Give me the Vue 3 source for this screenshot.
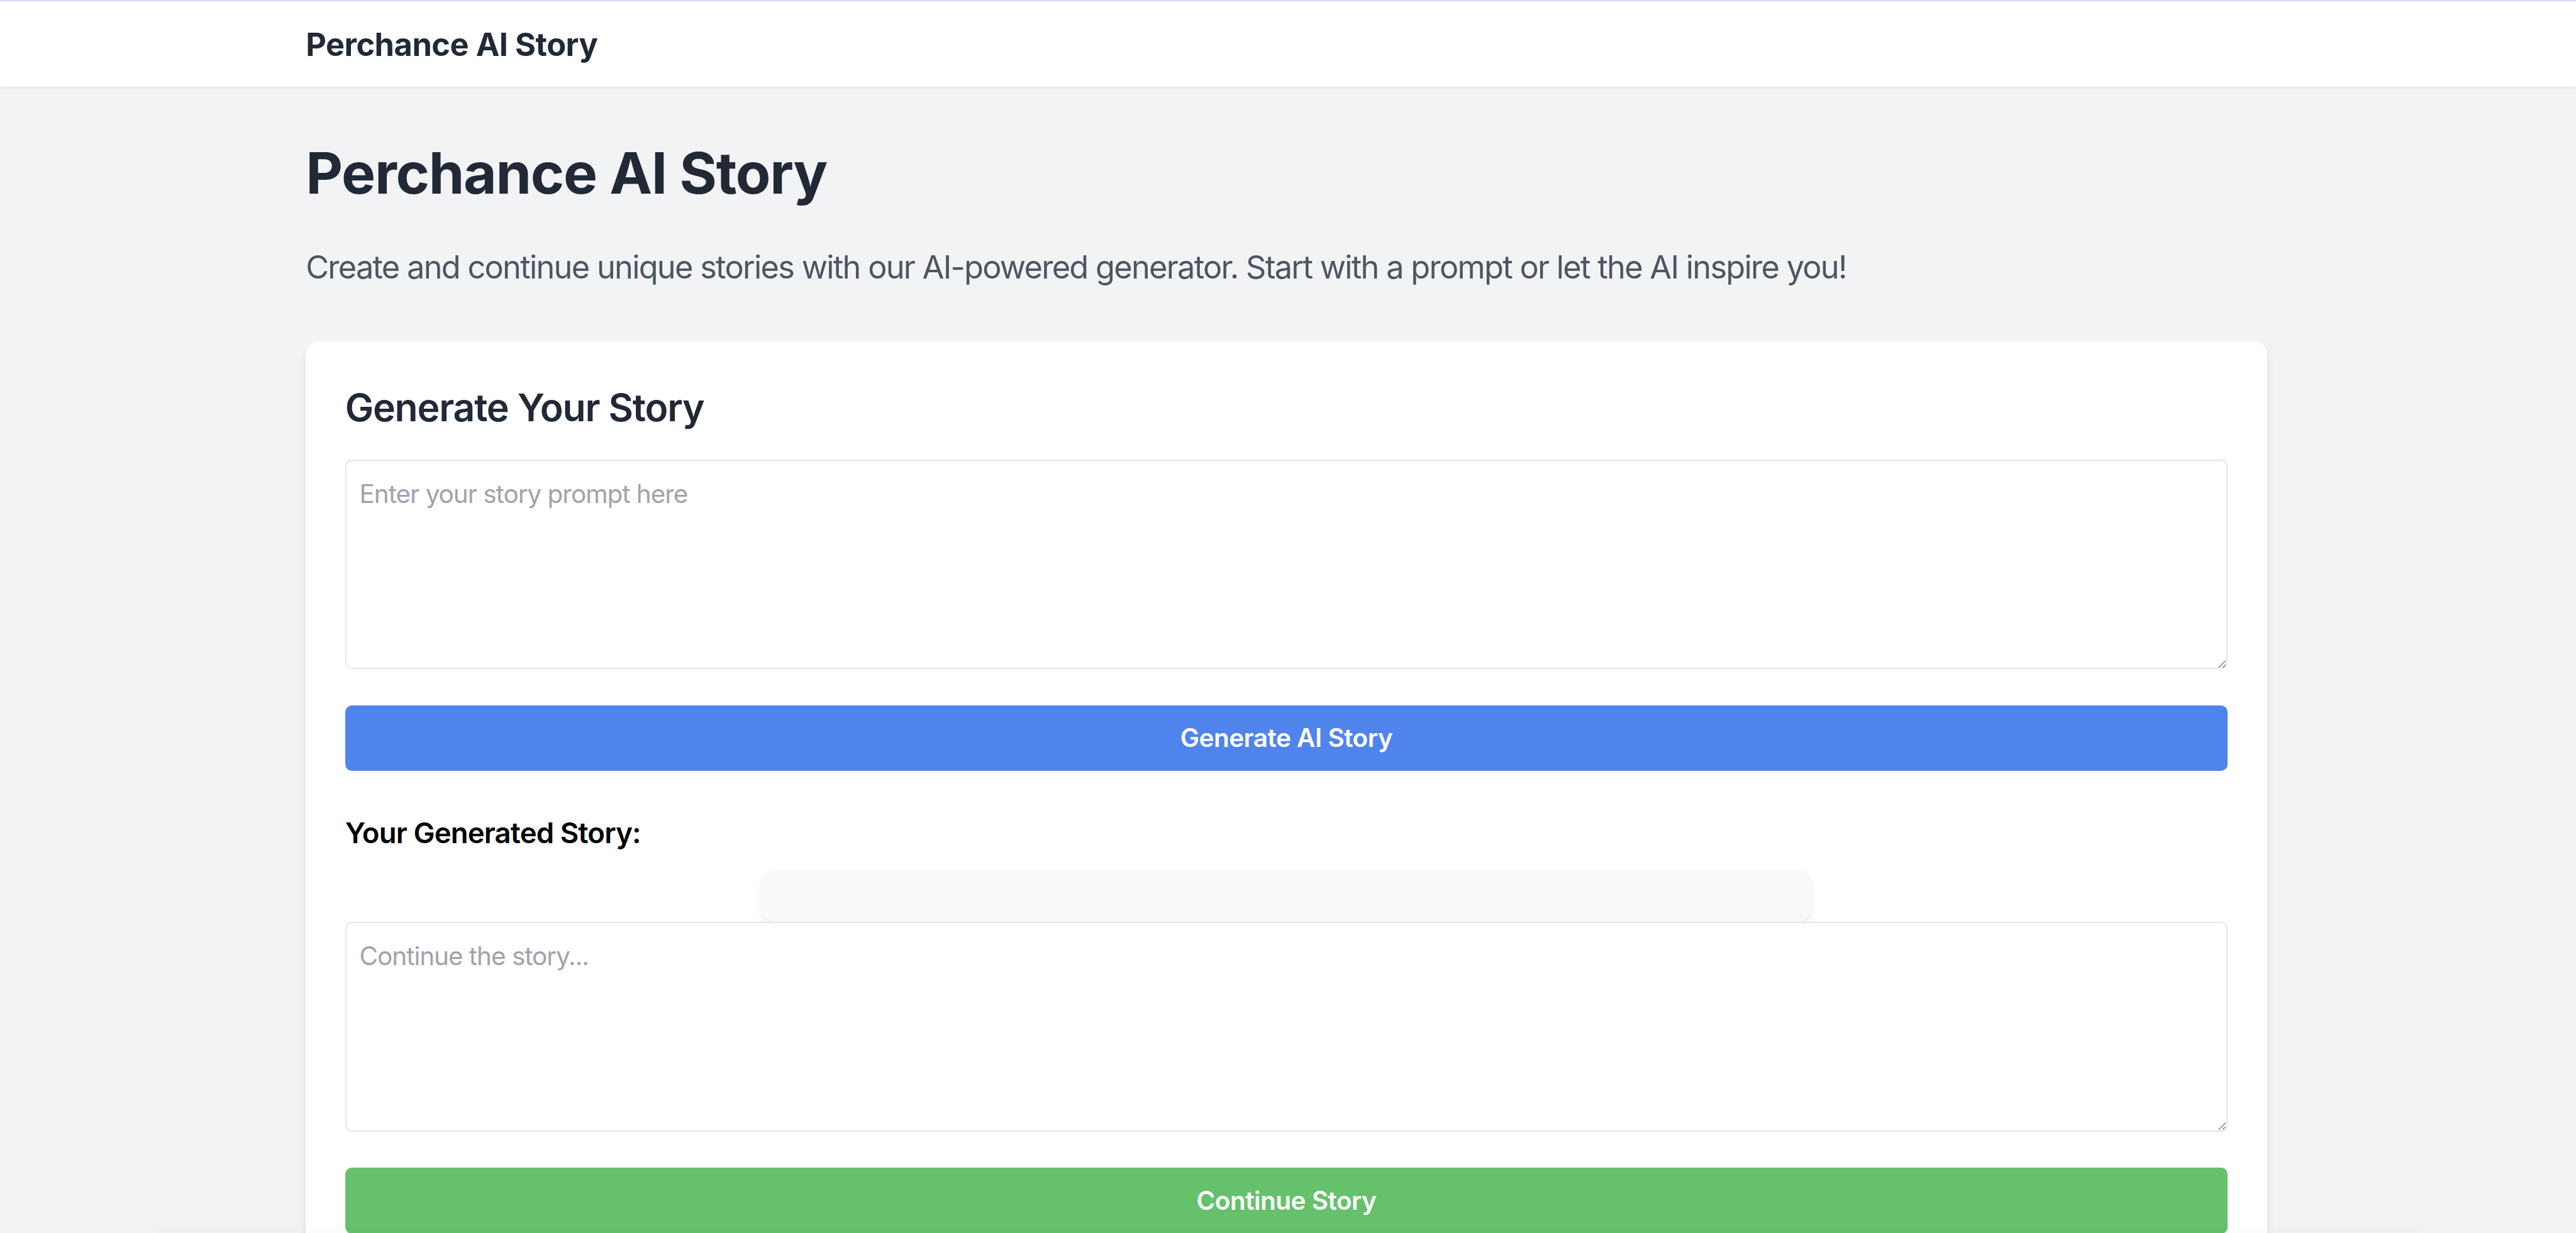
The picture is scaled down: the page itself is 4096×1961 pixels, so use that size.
<script setup>
import { ref } from 'vue'

const title = 'Perchance AI Story'
const prompt = ref('')
const continuation = ref('')
const story = ref('')
</script>

<template>
    <div class="page">
        <header class="nav">
            <div class="container">
                <span class="brand">{{ title }}</span>
            </div>
        </header>

        <main class="container">
            <h1>{{ title }}</h1>
            <p class="intro">
                Create and continue unique stories with our AI-powered generator. Start with a prompt or let the AI inspire you!
            </p>

            <section class="card">
                <h2>Generate Your Story</h2>
                <div class="field">
                    <textarea v-model="prompt" placeholder="Enter your story prompt here"></textarea>
                    <svg class="grip" viewBox="0 0 15 15">
                        <path d="M1 14 14 1M8.5 14 14 8.5" />
                    </svg>
                </div>
                <button class="btn blue-btn">Generate AI Story</button>

                <h3>Your Generated Story:</h3>
                <div class="story">{{ story }}</div>

                <div class="field">
                    <textarea v-model="continuation" placeholder="Continue the story..."></textarea>
                    <svg class="grip" viewBox="0 0 15 15">
                        <path d="M1 14 14 1M8.5 14 14 8.5" />
                    </svg>
                </div>
                <button class="btn green-btn">Continue Story</button>
            </section>
        </main>
        <div class="bottom-shade"></div>
    </div>
</template>

<style>
html{
    font-size: 41.694px;
}

body{
    margin: 0;
    overflow: hidden;
}
</style>

<style scoped>
.page{
    position: relative;
    box-sizing: border-box;
    height: 100vh;
    overflow: hidden;
    background: #f2f3f5;
    color: #212936;
    font-family: Inter, "Liberation Sans", sans-serif;
}

.container{
    width: 74.8rem;
    margin-left: 11.66rem;
}

.nav{
    position: relative;
    box-sizing: border-box;
    height: 3.3rem;
    padding-top: 0.785rem;
    border-top: 2px solid #d9d3f3;
    background: #fff;
    box-shadow: 0 0.0625rem 0.125rem rgba(0, 0, 0, 0.05);
}

.brand{
    display: block;
    font-size: 1.21rem;
    font-weight: 700;
    line-height: 1.75rem;
    letter-spacing: -0.009em;
}

h1, h2, h3, p{
    margin: 0;
    white-space: nowrap;
}

h1{
    padding-top: 2.056rem;
    font-size: 2.18rem;
    font-weight: 700;
    line-height: 2.5rem;
    letter-spacing: -0.0137em;
}

.intro{
    margin-top: 1.468rem;
    color: #4d5562;
    font-size: 1.21rem;
    line-height: 1.75rem;
    letter-spacing: -0.0337em;
}

.card{
    box-sizing: border-box;
    margin-top: 1.956rem;
    padding: 1.53rem 1.5rem 1.5rem;
    border-radius: 0.5rem;
    background: #fff;
    box-shadow: 0 0.25rem 0.375rem -0.0625rem rgba(0, 0, 0, 0.1), 0 0.125rem 0.25rem -0.125rem rgba(0, 0, 0, 0.1);
}

h2{
    margin-bottom: 0.97rem;
    font-size: 1.454rem;
    font-weight: 620;
    line-height: 2rem;
    letter-spacing: -0.019em;
}

.field{
    position: relative;
    height: 8rem;
    margin-bottom: 1.38rem;
}

textarea{
    display: block;
    box-sizing: border-box;
    width: 100%;
    height: 100%;
    padding: 0.53rem 0.5rem 0.5rem;
    border: 2px solid #e5e5ea;
    border-radius: 0.25rem;
    background: #fff;
    font-family: inherit;
    font-size: 0.97rem;
    line-height: 1.5rem;
    letter-spacing: -0.025em;
    resize: none;
    outline: none;
}

textarea::placeholder{
    color: #9ea3ae;
    opacity: 1;
}

.grip{
    position: absolute;
    right: 0.06rem;
    bottom: 0.05rem;
    width: 0.3rem;
    height: 0.3rem;
    fill: none;
    stroke: #606060;
    stroke-width: 1.4;
}

.btn{
    display: block;
    width: 100%;
    height: 2.5rem;
    padding: 0.03rem 0 0;
    border: none;
    border-radius: 0.25rem;
    color: #fff;
    font-family: inherit;
    font-size: 0.97rem;
    font-weight: 630;
    line-height: 2.47rem;
    letter-spacing: -0.012em;
}

.blue-btn{
    background: #4f84ed;
}

.green-btn{
    background: #65c16b;
}

h3{
    margin: 1.508rem 0 0.5rem;
    color: #000;
    font-size: 1.09rem;
    font-weight: 620;
    line-height: 1.75rem;
    letter-spacing: -0.018em;
}

.story{
    box-sizing: border-box;
    width: 40rem;
    height: 2rem;
    margin: 0 auto;
    padding: 1rem;
    border-radius: 0.5rem;
    background: #f9f9f9;
    box-shadow: 0 0.125rem 0.25rem rgba(0, 0, 0, 0.08);
}

.bottom-shade{
    position: absolute;
    left: 6rem;
    right: 6rem;
    bottom: 0;
    height: 0.5rem;
    background: linear-gradient(transparent, rgba(0, 0, 0, 0.012));
    pointer-events: none;
}
</style>
